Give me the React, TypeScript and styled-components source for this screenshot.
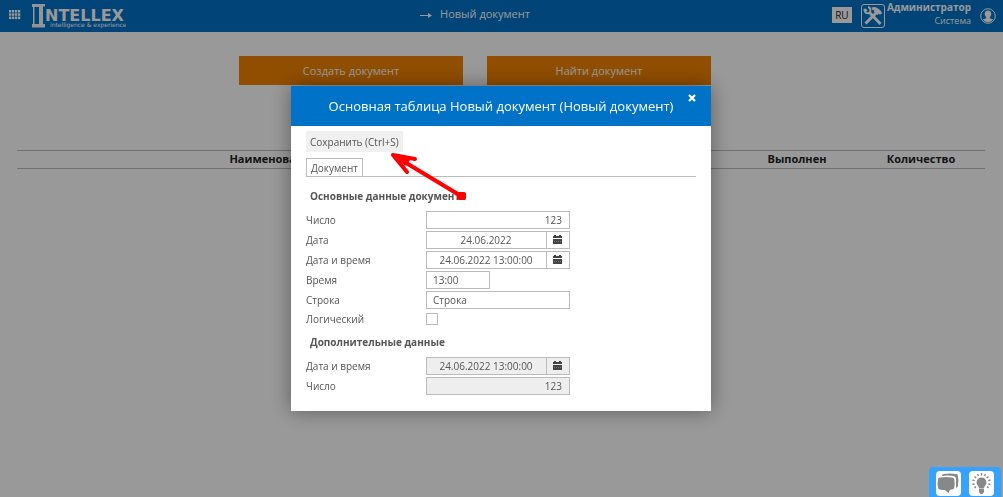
import React from 'react';
import styled, { createGlobalStyle } from 'styled-components';

const GlobalStyle = createGlobalStyle`
  * { box-sizing: border-box; }
  body { margin: 0; background: #fff; font-family: "Open Sans", "Noto Sans", sans-serif; }
  button, input { font-family: inherit; margin: 0; }
`;

const Page = styled.div`
  min-height: 100vh;
  color: #222;
`;

const TopBar = styled.header`
  display: grid;
  grid-template-columns: 1fr auto 1fr;
  align-items: center;
  height: 32px;
  padding: 0 7px 0 8px;
  background: #0072c8;
  color: #fff;
`;

const BarGroup = styled.div<{ $end?: boolean }>`
  display: flex;
  align-items: center;
  height: 30px;
  justify-content: ${p => (p.$end ? 'flex-end' : 'flex-start')};
`;

const IconButton = styled.button`
  display: flex;
  padding: 0;
  border: 0;
  background: none;
  color: inherit;
`;

const LogoLink = styled.a`
  display: flex;
  margin-left: 11px;
`;

const PageTitle = styled.h1`
  display: flex;
  align-items: center;
  gap: 8px;
  margin: 0 54px 4px 0;
  font-size: 11px;
  line-height: 18px;
  font-weight: 500;
`;

const LangButton = styled.button`
  width: 20px;
  height: 16px;
  margin: 0 9px 2px 0;
  padding: 0;
  border: 0;
  background: #fff;
  color: #222;
  font-size: 10px;
  line-height: 14px;
`;

const UserInfo = styled.div`
  margin: 0 9px 4px 2px;
  text-align: right;
  font-size: 9px;
  line-height: 13px;
`;

const UserName = styled.strong`
  display: block;
  font-size: 10px;
`;

const Actions = styled.div`
  display: flex;
  justify-content: center;
  gap: 24px;
  padding: 24px 53px 0 0;
`;

const ActionButton = styled.button`
  width: 224px;
  height: 29px;
  padding: 0;
  border: 0;
  background: #f28300;
  color: #fff;
  font-size: 11px;
  font-weight: 500;
`;

const ListTable = styled.table`
  width: calc(100% - 35px);
  margin: 65px 18px 0 17px;
  border-collapse: collapse;
  table-layout: fixed;

  th {
    height: 18px;
    padding: 0 0 2px;
    border: 1px solid #bcbcbc;
    border-width: 1px 0;
    font-size: 11px;
    line-height: 15px;
    font-weight: 700;
  }
`;

const Col = styled.col<{ $width?: string }>`
  width: ${p => p.$width ?? 'auto'};
`;

const Overlay = styled.div`
  position: fixed;
  inset: 0;
  display: flex;
  justify-content: center;
  align-items: flex-start;
  padding: 86px 1px 0 0;
  background: rgba(0, 0, 0, 0.4);
`;

const Dialog = styled.section`
  position: relative;
  width: 420px;
  background: #fff;
  color: #555;
  box-shadow: 0 0 20px rgba(0, 0, 0, 0.4);
`;

const DialogHeader = styled.header`
  display: flex;
  align-items: center;
  justify-content: center;
  height: 40px;
  background: #0072c8;
  color: #fff;
`;

const DialogTitle = styled.h2`
  margin: 0;
  font-size: 13px;
  line-height: 20px;
  font-weight: 400;
`;

const CloseButton = styled(IconButton)`
  position: absolute;
  top: 8px;
  right: 15px;
`;

const Form = styled.form`
  display: flex;
  flex-direction: column;
  align-items: flex-start;
  padding: 5px 15px 16px;
`;

const SaveButton = styled.button`
  height: 21px;
  padding: 0 4px;
  border: 0;
  background: #f0f0f0;
  color: #555;
  font-size: 10px;
  line-height: 20px;
`;

const Tabs = styled.div`
  align-self: stretch;
  display: flex;
  margin: 6px 0 4px;
  border-bottom: 1px solid #bbb;
`;

const Tab = styled.button`
  height: 18px;
  padding: 0 4px;
  border: 1px solid #bbb;
  border-bottom: 0;
  background: #fff;
  color: #555;
  font-size: 10px;
  line-height: 16px;
`;

const Group = styled.fieldset`
  display: flex;
  flex-direction: column;
  gap: 2px;
  min-width: 0;
  margin: 0;
  padding: 6px 0 0;
  border: 0;
`;

const GroupTitle = styled.legend`
  float: left;
  margin-bottom: 4px;
  padding: 0 4px;
  font-size: 10px;
  line-height: 18px;
  font-weight: 700;
`;

const Row = styled.div<{ $check?: boolean }>`
  display: flex;
  align-items: center;
  height: ${p => (p.$check ? 16 : 18)}px;
`;

const Label = styled.label`
  width: 120px;
  font-size: 10px;
  line-height: 18px;
`;

const TextInput = styled.input<{ $width?: number; $align?: string }>`
  width: ${p => p.$width ?? 144}px;
  height: 18px;
  padding: 0 7px 0 6px;
  border: 1px solid #bbb;
  border-radius: 0;
  outline: 0;
  background: #fff;
  color: #555;
  font-size: 10px;
  text-align: ${p => p.$align ?? 'left'};

  &:read-only { background: #eee; }
`;

const DateButton = styled.button<{ $locked?: boolean }>`
  display: flex;
  align-items: center;
  justify-content: center;
  width: 24px;
  height: 18px;
  margin-left: -1px;
  padding: 0 2px 2px 0;
  border: 1px solid #bbb;
  background: ${p => (p.$locked ? '#eee' : '#fff')};
  color: #444;
`;

const CheckBox = styled.input`
  appearance: none;
  width: 12px;
  height: 12px;
  border: 1px solid #bbb;
  background: #fff;
`;

const Pointer = styled.svg`
  position: absolute;
  top: 64px;
  left: 97px;
  pointer-events: none;
`;

const HelpDock = styled.nav`
  position: fixed;
  right: 2px;
  bottom: 0;
  display: flex;
  gap: 8px;
  height: 30px;
  padding: 4px 7px 0;
  border-radius: 4px 4px 0 0;
  background: #33a3ff;
`;

const DockButton = styled.button`
  width: 25px;
  height: 25px;
  padding: 0;
  border: 0;
  border-radius: 4px;
  background: #fff;
`;

const GridIcon = () => (
  <svg width="13" height="12" viewBox="0 0 13 12" fill="currentColor">
    {[0, 3.3, 6.6].map(y => [1, 4, 7, 10].map(x => (
      <rect key={`${x}-${y}`} x={x} y={y} width="2.300" height="2.500" />
    )))}
  </svg>
);

const Logo = () => (
  <svg width="94" height="28" viewBox="0 0 94 28" fill="#fff">
    <path d="M0 2h13v2.500h-2V22h2v3.500H0V22h1V5H0zM2.500 5v17H7V5z" fillRule="evenodd" opacity=".95" />
    <text x="13" y="19" fontFamily="DejaVu Sans" fontWeight="700" fontSize="16">NTELLEX</text>
    <text x="18" y="25" fontFamily="DejaVu Sans" fontSize="6">intelligence &amp; experience</text>
  </svg>
);

const ArrowIcon = () => (
  <svg width="12" height="8" viewBox="0 0 12 8" fill="none" stroke="currentColor">
    <path d="M0 5.500h10" />
    <path d="M8 3l4 2.500L8 8z" fill="currentColor" stroke="none" />
  </svg>
);

const ToolsIcon = () => (
  <svg width="24" height="24" viewBox="0 0 24 24" fill="none" stroke="#fff">
    <rect x=".5" y=".5" width="23" height="23" rx="2.500" />
    <path d="M8 8 19.500 20" strokeWidth="3" />
    <path d="M3.500 5c-.5 3 1.500 5 5 4M3.500 5l2.500 2M7 3c2 .5 3 2.500 2 5" strokeWidth="2" />
    <path d="M4.500 19.500 15 9" strokeWidth="3" />
    <path d="M11 5c3-1.500 5-.5 8 3.500M13.500 6l4 4M18 9.500l2.500-1.500" strokeWidth="3" />
  </svg>
);

const UserIcon = () => (
  <svg width="16" height="16" viewBox="0 0 16 16">
    <circle cx="8" cy="8" r="7.300" fill="none" stroke="#fff" />
    <path d="M8 2.500c2.200 0 3.300 1.300 3.300 3.300 0 1.500-.6 2.700-1.500 3.400v1l3.400 1.400A6.300 6.300 0 0 1 8 14.200a6.300 6.300 0 0 1-5.200-2.600l3.400-1.400v-1c-.9-.7-1.500-1.900-1.500-3.400 0-2 1.100-3.300 3.300-3.300z" fill="#fff" />
  </svg>
);

const CloseIcon = () => (
  <svg width="8" height="8" viewBox="0 0 8 8" stroke="#fff" strokeWidth="2.200">
    <path d="M1 1l6 6M7 1 1 7" />
  </svg>
);

const CalendarIcon = () => (
  <svg width="9" height="9" viewBox="0 0 9 9" fill="currentColor">
    <path d="M1 0h2v1h3V0h2v1h1v2H0V1h1zM0 4h9v5H0z" />
    <path d="M1 6.500h7" stroke="#777" strokeDasharray="1 1" />
  </svg>
);

const ChatIcon = () => (
  <svg width="25" height="25" viewBox="0 0 25 25" fill="#888">
    <path d="M7 3q7-1 13 0 2 0 2 2 .8 5 0 10 0 1-2 2V8q0-3-3-3-6-.8-11 0 0-1 1-2z" />
    <path d="M4 6.500q6-1 12 0 2 0 2.300 2 .8 4 0 8-.3 2-2.300 2l-2 .3-1.500 3.200-3.500-3q-3 0-5-.5-2 0-2-2-.8-4 0-8 0-2 2-2z" />
  </svg>
);

const BulbIcon = () => (
  <svg width="25" height="25" viewBox="0 0 25 25" fill="#888">
    <path d="M12.500 6.500a5 5 0 0 1 5 5c0 2.500-2.500 3.500-2.500 6h-5c0-2.500-2.500-3.500-2.500-6a5 5 0 0 1 5-5zM10 18h5v3l-1.500 2h-2L10 21z" />
    <path d="M12.500 2v2.500M8.500 3l1 2M16.500 3l-1 2M5.500 5.500 7.200 7M19.500 5.500 17.800 7M3.500 9l2.200.7M21.500 9l-2.200.7M3.500 13.500l2.200-.7M21.500 13.500l-2.200-.7M5.500 17l1.500-1.500M19.500 17 18 15.500" stroke="#888" strokeWidth="1.400" />
  </svg>
);

interface FieldProps {
  id: string;
  label: string;
  value: string;
  align?: string;
  width?: number;
  date?: boolean;
  locked?: boolean;
}

const Field = ({ id, label, value, align, width, date, locked }: FieldProps) => (
  <Row>
    <Label htmlFor={id}>{label}</Label>
    <TextInput
      id={id}
      defaultValue={value}
      readOnly={locked}
      $width={date ? 121 : width}
      $align={date ? 'center' : align}
    />
    {date && (
      <DateButton type="button" aria-label="Календарь" $locked={locked}>
        <CalendarIcon />
      </DateButton>
    )}
  </Row>
);

export default function App() {
  return (
    <Page>
      <GlobalStyle />
      <TopBar>
        <BarGroup>
          <IconButton type="button" aria-label="Меню"><GridIcon /></IconButton>
          <LogoLink href="#" aria-label="Intellex"><Logo /></LogoLink>
        </BarGroup>
        <PageTitle><ArrowIcon />Новый документ</PageTitle>
        <BarGroup $end>
          <LangButton type="button">RU</LangButton>
          <IconButton type="button" aria-label="Настройки"><ToolsIcon /></IconButton>
          <UserInfo>
            <UserName>Администратор</UserName>
            Система
          </UserInfo>
          <IconButton type="button" aria-label="Профиль"><UserIcon /></IconButton>
        </BarGroup>
      </TopBar>
      <main>
        <Actions>
          <ActionButton type="button">Создать документ</ActionButton>
          <ActionButton type="button">Найти документ</ActionButton>
        </Actions>
        <ListTable>
          <colgroup>
            <Col $width="53%" />
            <Col />
            <Col $width="120px" />
            <Col $width="128px" />
          </colgroup>
          <thead>
            <tr>
              <th>Наименование</th>
              <th />
              <th>Выполнен</th>
              <th>Количество</th>
            </tr>
          </thead>
        </ListTable>
      </main>
      <Overlay>
        <Dialog role="dialog" aria-labelledby="dialog-title">
          <DialogHeader>
            <DialogTitle id="dialog-title">Основная таблица Новый документ (Новый документ)</DialogTitle>
            <CloseButton type="button" aria-label="Закрыть"><CloseIcon /></CloseButton>
          </DialogHeader>
          <Form>
            <SaveButton type="button">Сохранить (Ctrl+S)</SaveButton>
            <Tabs role="tablist">
              <Tab type="button" role="tab" aria-selected>Документ</Tab>
            </Tabs>
            <Group>
              <GroupTitle>Основные данные документа</GroupTitle>
              <Field id="number" label="Число" value="123" align="right" />
              <Field id="date" label="Дата" value="24.06.2022" date />
              <Field id="datetime" label="Дата и время" value="24.06.2022 13:00:00" date />
              <Field id="time" label="Время" value="13:00" width={64} />
              <Field id="string" label="Строка" value="Строка" />
              <Row $check>
                <Label htmlFor="logical">Логический</Label>
                <CheckBox id="logical" type="checkbox" />
              </Row>
            </Group>
            <Group>
              <GroupTitle>Дополнительные данные</GroupTitle>
              <Field id="extra-datetime" label="Дата и время" value="24.06.2022 13:00:00" date locked />
              <Field id="extra-number" label="Число" value="123" align="right" locked />
            </Group>
          </Form>
          <Pointer width="82" height="56" viewBox="0 0 82 56" fill="none" stroke="#f00" strokeWidth="4" strokeLinecap="round">
            <path d="M5 5 73 46M5 5l22 4M5 5l14 17" />
            <rect x="69" y="42" width="9" height="8" rx="2" fill="#f00" stroke="none" />
            <path d="M3 3l20 6-6 7z" fill="#f00" stroke="none" />
          </Pointer>
        </Dialog>
      </Overlay>
      <HelpDock>
        <DockButton type="button" aria-label="Чат"><ChatIcon /></DockButton>
        <DockButton type="button" aria-label="Подсказки"><BulbIcon /></DockButton>
      </HelpDock>
    </Page>
  );
}
